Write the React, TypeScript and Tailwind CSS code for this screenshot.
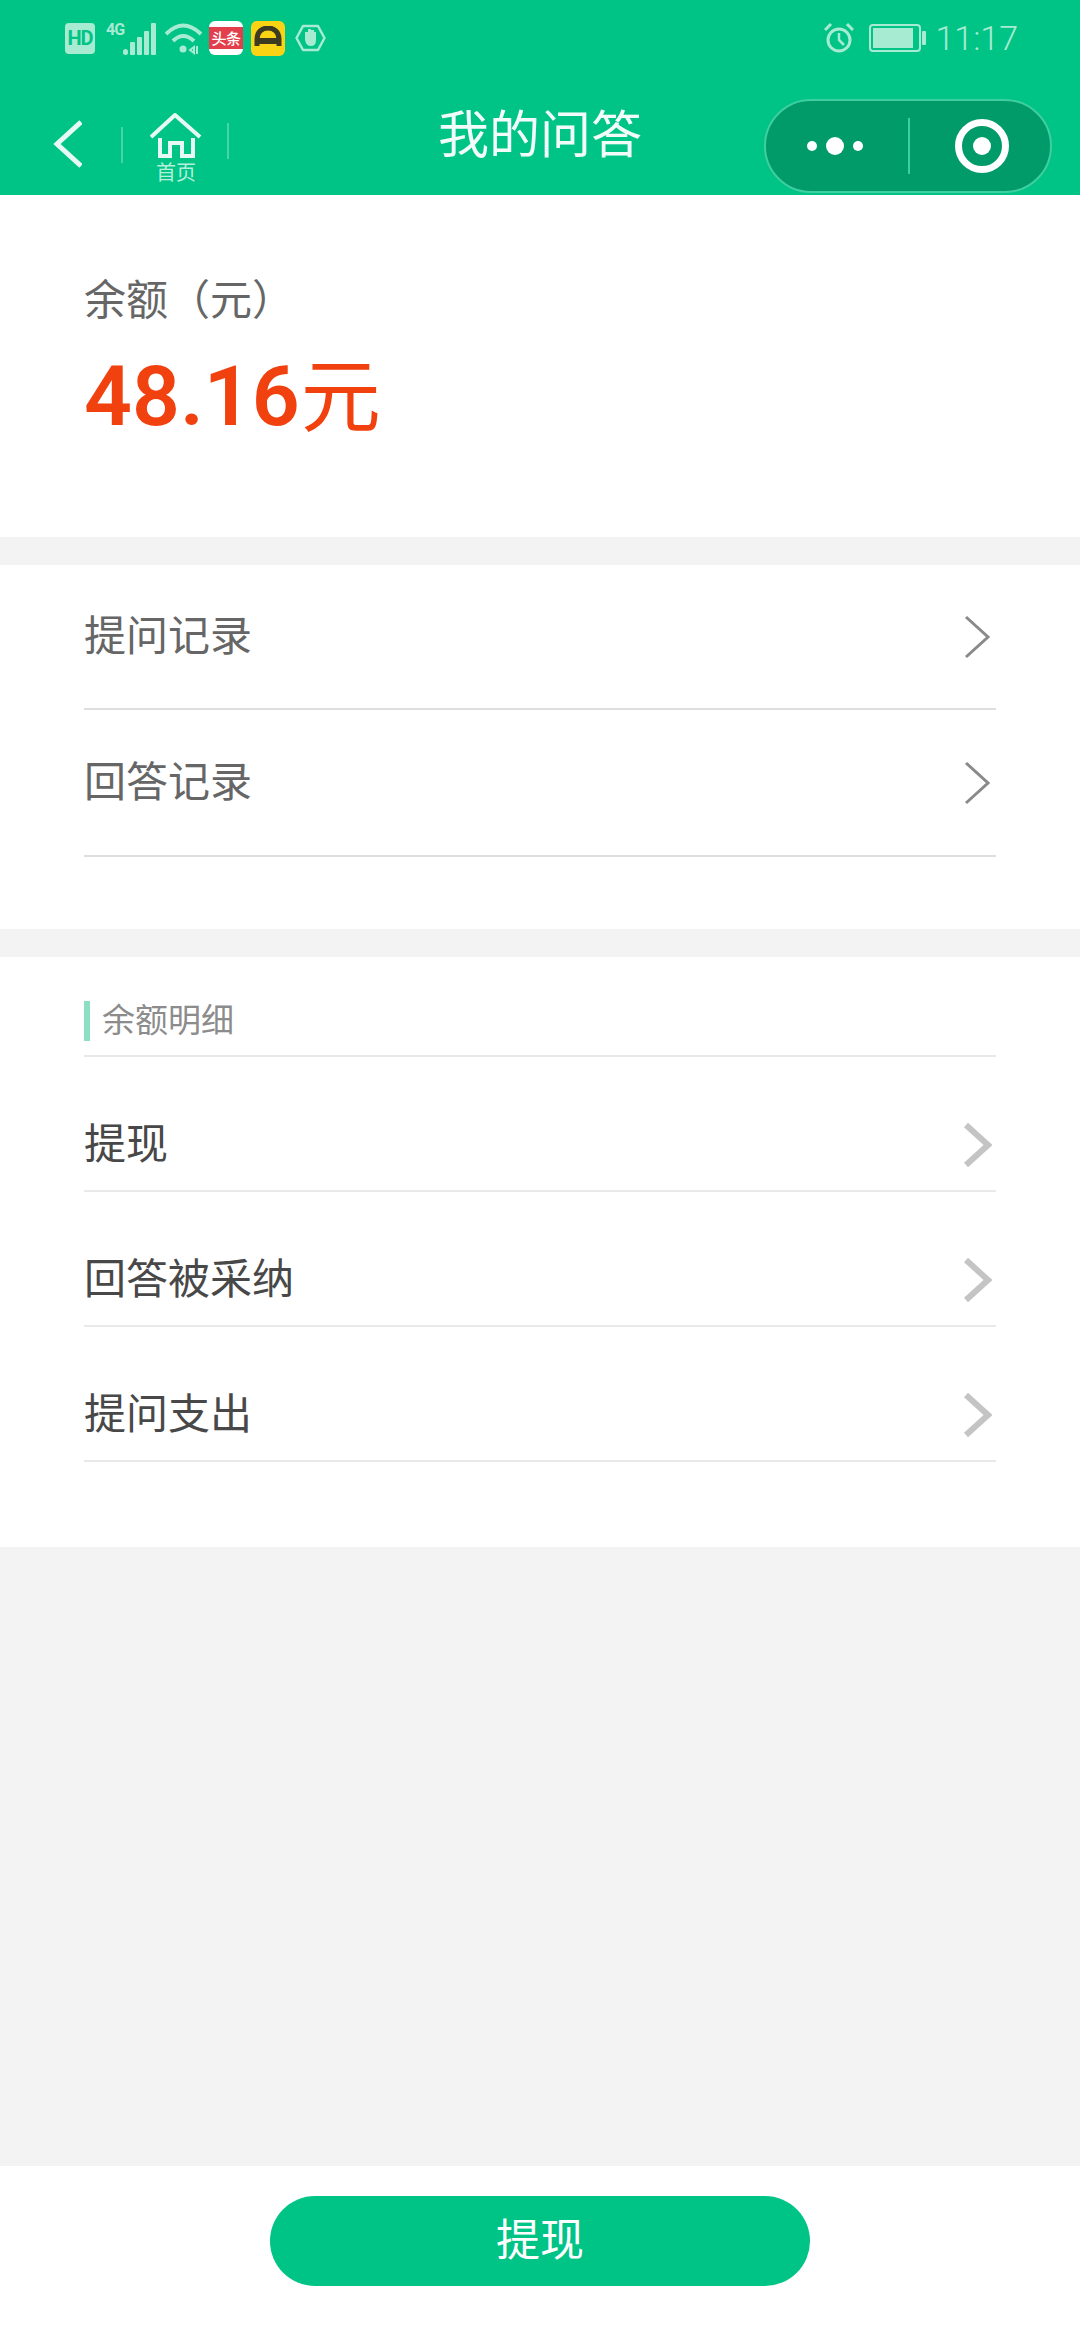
import React from 'react';

const cjk = "font-['Roboto','Noto_Sans_CJK_SC',sans-serif]";

const Chevron = ({ light }: { light?: boolean }) => (
  <svg width="30" height="46" viewBox="0 0 30 46" fill="none" className="shrink-0">
    <path
      d="M4 3 L26 23 L4 43"
      stroke={light ? '#c4c4c4' : '#8a8a8a'}
      strokeWidth={light ? 6 : 3}
    />
  </svg>
);

const StatusBar = () => (
  <div className="h-[75px] flex items-center justify-between pl-[65px] pr-[62px] pt-[1px] text-[#a6ebd2]">
    <div className="flex items-center">
      <div className="w-[30px] h-[31px] rounded-[4px] bg-[#a6ebd2] text-[#00c386] text-[20px] font-bold leading-[31px] text-center tracking-[-1px]">HD</div>
      <div className="relative w-[17px] h-[32px] ml-[11px]">
        <span className="absolute left-0 -top-[2px] text-[16px] font-bold leading-[20px] tracking-[-1px]">4G</span>
      </div>
      <svg width="33" height="33" viewBox="0 0 33 33" fill="#a6ebd2">
        <rect x="0" y="27" width="5" height="6" rx="2.5" />
        <rect x="7" y="20" width="5" height="13" rx="1" />
        <rect x="14" y="15" width="5" height="18" rx="1" />
        <rect x="21" y="9" width="5" height="24" rx="1" />
        <rect x="28" y="1" width="5" height="32" rx="1" />
      </svg>
      <svg width="37" height="33" viewBox="0 0 37 33" className="ml-[9px]" fill="none" stroke="#a6ebd2" strokeWidth="4">
        <path d="M1 12 Q18 -5 36 12" />
        <path d="M8 19 Q18 9 29 19" />
        <circle cx="18" cy="27" r="3.5" fill="#a6ebd2" stroke="none" />
        <path d="M25 28 l4 -3 v6 z M32 24 v8" strokeWidth="2" />
      </svg>
      <div className="ml-[7px] w-[34px] h-[34px] rounded-[6px] bg-white flex items-center justify-center">
        <div className="w-full h-[22px] bg-[#e33e4c] text-white text-[15px] leading-[22px] text-center font-['Noto_Sans_CJK_SC',sans-serif] font-medium tracking-[-0.5px]">头条</div>
      </div>
      <div className="ml-[8px] w-[34px] h-[35px] rounded-[6px] bg-[#fbd315] flex items-center justify-center">
        <svg width="30" height="24" viewBox="0 0 30 24" fill="none">
          <path d="M4 20 V13 C4 6 9 2 15 2 C21 2 26 6 26 13 V20" stroke="#3d3a22" strokeWidth="5" />
          <path d="M2 12 H28 V18 H2 Z" fill="#3d3a22" />
        </svg>
      </div>
      <svg width="31" height="28" viewBox="0 0 31 28" className="ml-[10px]" fill="none">
        <path d="M8 2 H23 L29.5 14 L23 26 H8 L1.5 14 Z" stroke="#a6ebd2" strokeWidth="2.5" strokeLinejoin="round" />
        <path d="M10 11 V16 Q11 22 16 22 Q21 22 21 16 V8 H19 V6 H16 V5 H13 V8 H10 Z" fill="#a6ebd2" />
      </svg>
    </div>
    <div className="flex items-center">
      <svg width="30" height="32" viewBox="0 0 30 32" fill="none" stroke="#a6ebd2" strokeWidth="3">
        <circle cx="15" cy="18" r="11" />
        <path d="M15 11 V18 L20 23" strokeWidth="2.5" />
        <path d="M1 8 L7 2 M23 2 L29 8" />
      </svg>
      <svg width="58" height="28" viewBox="0 0 58 28" className="ml-[15px]" fill="none">
        <rect x="1" y="1" width="50" height="26" rx="3" stroke="#a6ebd2" strokeWidth="2" />
        <rect x="4" y="4" width="40" height="20" fill="#a6ebd2" />
        <rect x="53" y="7" width="4" height="14" rx="1" fill="#a6ebd2" />
      </svg>
      <span className="ml-[8px] text-[34px] leading-[36px] font-['Roboto',sans-serif] font-light">11:17</span>
    </div>
  </div>
);

const NavBar = () => (
  <div className="relative h-[120px] flex items-start pl-[52px] pt-[38px]">
    <svg width="30" height="48" viewBox="0 0 30 48" fill="none" stroke="#e6faf3" strokeWidth="5" className="mt-[7px] shrink-0">
      <path d="M29 2 L5 24 L29 46" />
    </svg>
    <div className="ml-[39px] mt-[14px] w-[2px] h-[36px] bg-[#45d5a6]" />
    <div className="ml-[27px] w-[52px] flex flex-col items-center">
      <svg width="52" height="46" viewBox="0 0 52 46" fill="none" stroke="#e6faf3" strokeWidth="4">
        <path d="M1 24 L25 2 L50 24" strokeLinejoin="round" />
        <path d="M10 25 V43 H20 V30 H32 V43 H43 V25" />
      </svg>
      <span className="text-[#b5f0db] text-[20px] leading-[22px] font-['Noto_Sans_CJK_SC',sans-serif] mt-[2px]">首页</span>
    </div>
    <div className="ml-[25px] mt-[10px] w-[2px] h-[36px] bg-[#45d5a6]" />
    <div className="absolute left-0 right-0 top-[28px] text-center text-[#f2fcf8] text-[51px] leading-[56px] font-['Noto_Sans_CJK_SC',sans-serif]">
      我的问答
    </div>
    <div className="absolute left-[764px] top-[24px] w-[288px] h-[94px] rounded-[47px] bg-[#009b68] border-2 border-[#3fcf9f] flex items-center">
      <div className="w-[142px] flex items-center justify-center gap-[9px] pr-[4px]">
        <div className="w-[10px] h-[10px] rounded-full bg-white" />
        <div className="w-[18px] h-[18px] rounded-full bg-white" />
        <div className="w-[10px] h-[10px] rounded-full bg-white" />
      </div>
      <div className="w-[2px] h-[56px] bg-[#3fcf9f]" />
      <div className="flex-1 flex items-center justify-center pl-[4px]">
        <div className="w-[54px] h-[54px] rounded-full border-[7px] border-white flex items-center justify-center">
          <div className="w-[18px] h-[18px] rounded-full bg-white" />
        </div>
      </div>
    </div>
  </div>
);

const LinkRow = ({ label }: { label: string }) => (
  <div className="h-[147px] first:h-[145px] flex items-center justify-between border-b-2 border-[#dedede] pr-[4px]">
    <span className="text-[42px] leading-[50px] text-[#666666]">{label}</span>
    <Chevron />
  </div>
);

const DetailRow = ({ label }: { label: string }) => (
  <div className="h-[135px] flex items-end border-b-2 border-[#e9e9e9] pr-[4px] pb-[20px]">
    <div className="flex-1 flex items-center justify-between">
      <span className="text-[42px] leading-[50px] text-[#484848]">{label}</span>
      <Chevron light />
    </div>
  </div>
);

export default function App() {
  return (
    <div className={`w-[1080px] h-[2340px] flex flex-col bg-[#f3f3f3] ${cjk}`}>
      <header className="bg-[#00c386] h-[195px] shrink-0">
        <StatusBar />
        <NavBar />
      </header>

      <section className="h-[342px] bg-white px-[84px] pt-[81px]">
        <div className="text-[42px] leading-[50px] text-[#666666]">余额（元）</div>
        <div className="mt-[21px] flex items-baseline text-[#f0410f] text-[84px] leading-[100px] font-semibold">
          48.16<span className="font-normal text-[80px] ml-[1px]">元</span>
        </div>
      </section>

      <section className="h-[364px] mt-[28px] bg-white px-[84px]">
        <LinkRow label="提问记录" />
        <LinkRow label="回答记录" />
      </section>

      <section className="h-[590px] mt-[28px] bg-white px-[84px] pt-[44px]">
        <div className="h-[56px] border-b-2 border-[#e9e9e9] flex items-start">
          <div className="w-[6px] h-[40px] bg-[#8ddfc4]" />
          <span className="ml-[12px] text-[33px] leading-[40px] text-[#8c8c8c]">余额明细</span>
        </div>
        <DetailRow label="提现" />
        <DetailRow label="回答被采纳" />
        <DetailRow label="提问支出" />
      </section>

      <div className="flex-1" />

      <footer className="h-[174px] bg-white flex justify-center pt-[30px]">
        <button className="w-[540px] h-[90px] rounded-[45px] bg-[#00c386] text-white text-[44px]">提现</button>
      </footer>
    </div>
  );
}
